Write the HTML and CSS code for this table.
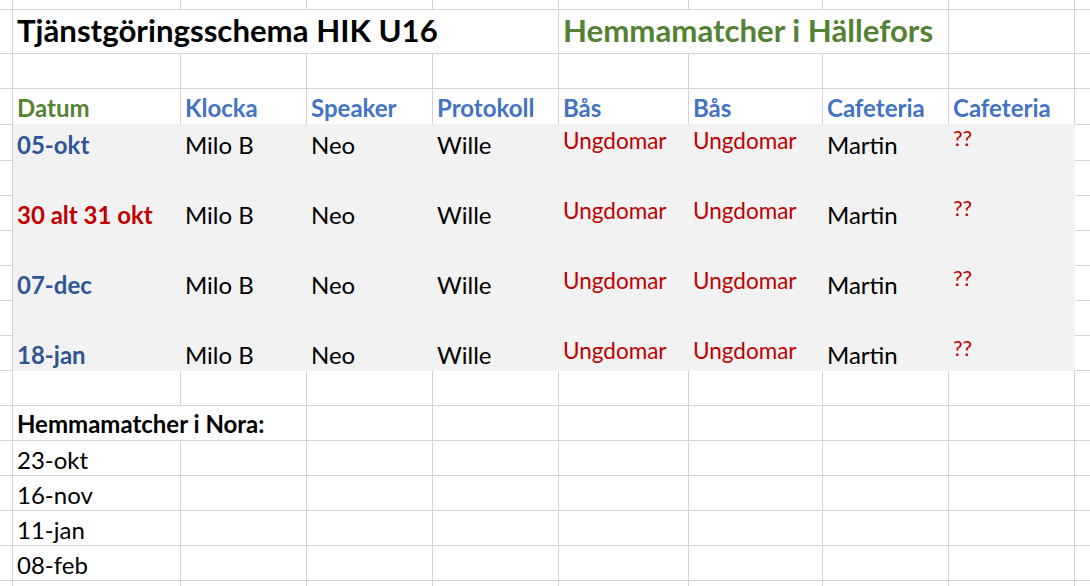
FILE: index.html
```html
<!DOCTYPE html>
<html lang="sv">
<head>
<meta charset="utf-8">
<title>Tjänstgöringsschema HIK U16</title>
<link rel="stylesheet" href="styles.css">
</head>
<body>
<div class="sheet">
  <div class="row r-top">
    <div class="c"></div><div class="c"></div><div class="c"></div><div class="c"></div><div class="c"></div><div class="c"></div><div class="c"></div><div class="c"></div><div class="c"></div><div class="c"></div>
  </div>
  <div class="row r-title">
    <div class="c"></div>
    <div class="c title span4">Tjänstgöringsschema HIK U16</div>
    <div class="c title green span3">Hemmamatcher i Hällefors</div>
    <div class="c"></div><div class="c"></div>
  </div>
  <div class="row">
    <div class="c"></div><div class="c"></div><div class="c"></div><div class="c"></div><div class="c"></div><div class="c"></div><div class="c"></div><div class="c"></div><div class="c"></div><div class="c"></div>
  </div>
  <div class="row r-36 above-fill">
    <div class="c"></div>
    <div class="c head green">Datum</div>
    <div class="c head">Klocka</div>
    <div class="c head">Speaker</div>
    <div class="c head">Protokoll</div>
    <div class="c head">Bås</div>
    <div class="c head">Bås</div>
    <div class="c head">Cafeteria</div>
    <div class="c head">Cafeteria</div>
    <div class="c"></div>
  </div>
  <div class="row r-36 fill">
    <div class="c"></div>
    <div class="c date">05-okt</div>
    <div class="c txt">Milo B</div>
    <div class="c txt">Neo</div>
    <div class="c txt">Wille</div>
    <div class="c ung">Ungdomar</div>
    <div class="c ung">Ungdomar</div>
    <div class="c txt">Martin</div>
    <div class="c qq">??</div>
    <div class="c"></div>
  </div>
  <div class="row fill">
    <div class="c"></div><div class="c"></div><div class="c"></div><div class="c"></div><div class="c"></div><div class="c"></div><div class="c"></div><div class="c"></div><div class="c"></div><div class="c"></div>
  </div>
  <div class="row fill">
    <div class="c"></div>
    <div class="c date red">30 alt 31 okt</div>
    <div class="c txt">Milo B</div>
    <div class="c txt">Neo</div>
    <div class="c txt">Wille</div>
    <div class="c ung">Ungdomar</div>
    <div class="c ung">Ungdomar</div>
    <div class="c txt">Martin</div>
    <div class="c qq">??</div>
    <div class="c"></div>
  </div>
  <div class="row fill">
    <div class="c"></div><div class="c"></div><div class="c"></div><div class="c"></div><div class="c"></div><div class="c"></div><div class="c"></div><div class="c"></div><div class="c"></div><div class="c"></div>
  </div>
  <div class="row fill">
    <div class="c"></div>
    <div class="c date">07-dec</div>
    <div class="c txt">Milo B</div>
    <div class="c txt">Neo</div>
    <div class="c txt">Wille</div>
    <div class="c ung">Ungdomar</div>
    <div class="c ung">Ungdomar</div>
    <div class="c txt">Martin</div>
    <div class="c qq">??</div>
    <div class="c"></div>
  </div>
  <div class="row fill">
    <div class="c"></div><div class="c"></div><div class="c"></div><div class="c"></div><div class="c"></div><div class="c"></div><div class="c"></div><div class="c"></div><div class="c"></div><div class="c"></div>
  </div>
  <div class="row fill">
    <div class="c"></div>
    <div class="c date">18-jan</div>
    <div class="c txt">Milo B</div>
    <div class="c txt">Neo</div>
    <div class="c txt">Wille</div>
    <div class="c ung">Ungdomar</div>
    <div class="c ung">Ungdomar</div>
    <div class="c txt">Martin</div>
    <div class="c qq">??</div>
    <div class="c"></div>
  </div>
  <div class="row">
    <div class="c"></div><div class="c"></div><div class="c"></div><div class="c"></div><div class="c"></div><div class="c"></div><div class="c"></div><div class="c"></div><div class="c"></div><div class="c"></div>
  </div>
  <div class="row">
    <div class="c"></div>
    <div class="c bold span2">Hemmamatcher i Nora:</div>
    <div class="c"></div><div class="c"></div><div class="c"></div><div class="c"></div><div class="c"></div><div class="c"></div><div class="c"></div>
  </div>
  <div class="row">
    <div class="c"></div>
    <div class="c txt">23-okt</div>
    <div class="c"></div><div class="c"></div><div class="c"></div><div class="c"></div><div class="c"></div><div class="c"></div><div class="c"></div><div class="c"></div>
  </div>
  <div class="row">
    <div class="c"></div>
    <div class="c txt">16-nov</div>
    <div class="c"></div><div class="c"></div><div class="c"></div><div class="c"></div><div class="c"></div><div class="c"></div><div class="c"></div><div class="c"></div>
  </div>
  <div class="row">
    <div class="c"></div>
    <div class="c txt">11-jan</div>
    <div class="c"></div><div class="c"></div><div class="c"></div><div class="c"></div><div class="c"></div><div class="c"></div><div class="c"></div><div class="c"></div>
  </div>
  <div class="row">
    <div class="c"></div>
    <div class="c txt">08-feb</div>
    <div class="c"></div><div class="c"></div><div class="c"></div><div class="c"></div><div class="c"></div><div class="c"></div><div class="c"></div><div class="c"></div>
  </div>
  <div class="row">
    <div class="c"></div><div class="c"></div><div class="c"></div><div class="c"></div><div class="c"></div><div class="c"></div><div class="c"></div><div class="c"></div><div class="c"></div><div class="c"></div>
  </div>
</div>
</body>
</html>
```

FILE: styles.css
```css
html, body {
  margin: 0;
  padding: 0;
  background: #ffffff;
  overflow: hidden;
}

.sheet {
  width: 1090px;
  height: 586px;
  overflow: hidden;
  font-family: Lato, "Open Sans", sans-serif;
  color: #000000;
}

.row {
  display: grid;
  grid-template-columns: 13px 168px 126px 126px 126px 130px 134px 126px 126px 40px;
  height: 35px;
}

.r-top { height: 10px; }
.r-title { height: 44px; }
.r-36 { height: 36px; }

.c {
  box-sizing: border-box;
  border-right: 1px solid #d4d4d4;
  border-bottom: 1px solid #d4d4d4;
  display: flex;
  align-items: flex-end;
  padding: 0 0 3px 4px;
  line-height: 1;
  white-space: nowrap;
  font-size: 24px;
  min-width: 0;
}

.span2 { grid-column: span 2; }
.span3 { grid-column: span 3; }
.span4 { grid-column: span 4; }

.fill .c:nth-child(n+2):nth-child(-n+9) {
  background: #f2f2f2;
  border-color: #f2f2f2;
}

.above-fill .c:nth-child(n+2):nth-child(-n+9) {
  border-bottom-color: #f2f2f2;
}

.title {
  font-size: 31.2px;
  font-weight: 700;
  padding-bottom: 7px;
}

.green { color: #548235; }

.head {
  font-weight: 700;
  color: #4472c4;
  padding-bottom: 4px;
}

.head.green { color: #548235; }

.date {
  font-weight: 700;
  color: #2f5597;
}

.date.red { color: #c00000; }

.txt { color: #000000; }

.bold { font-weight: 700; padding-bottom: 4px; }

.ung {
  font-size: 22.5px;
  color: #c00000;
  padding-bottom: 8px;
}

.qq {
  font-size: 21.5px;
  color: #c00000;
  padding-bottom: 11px;
}
```
